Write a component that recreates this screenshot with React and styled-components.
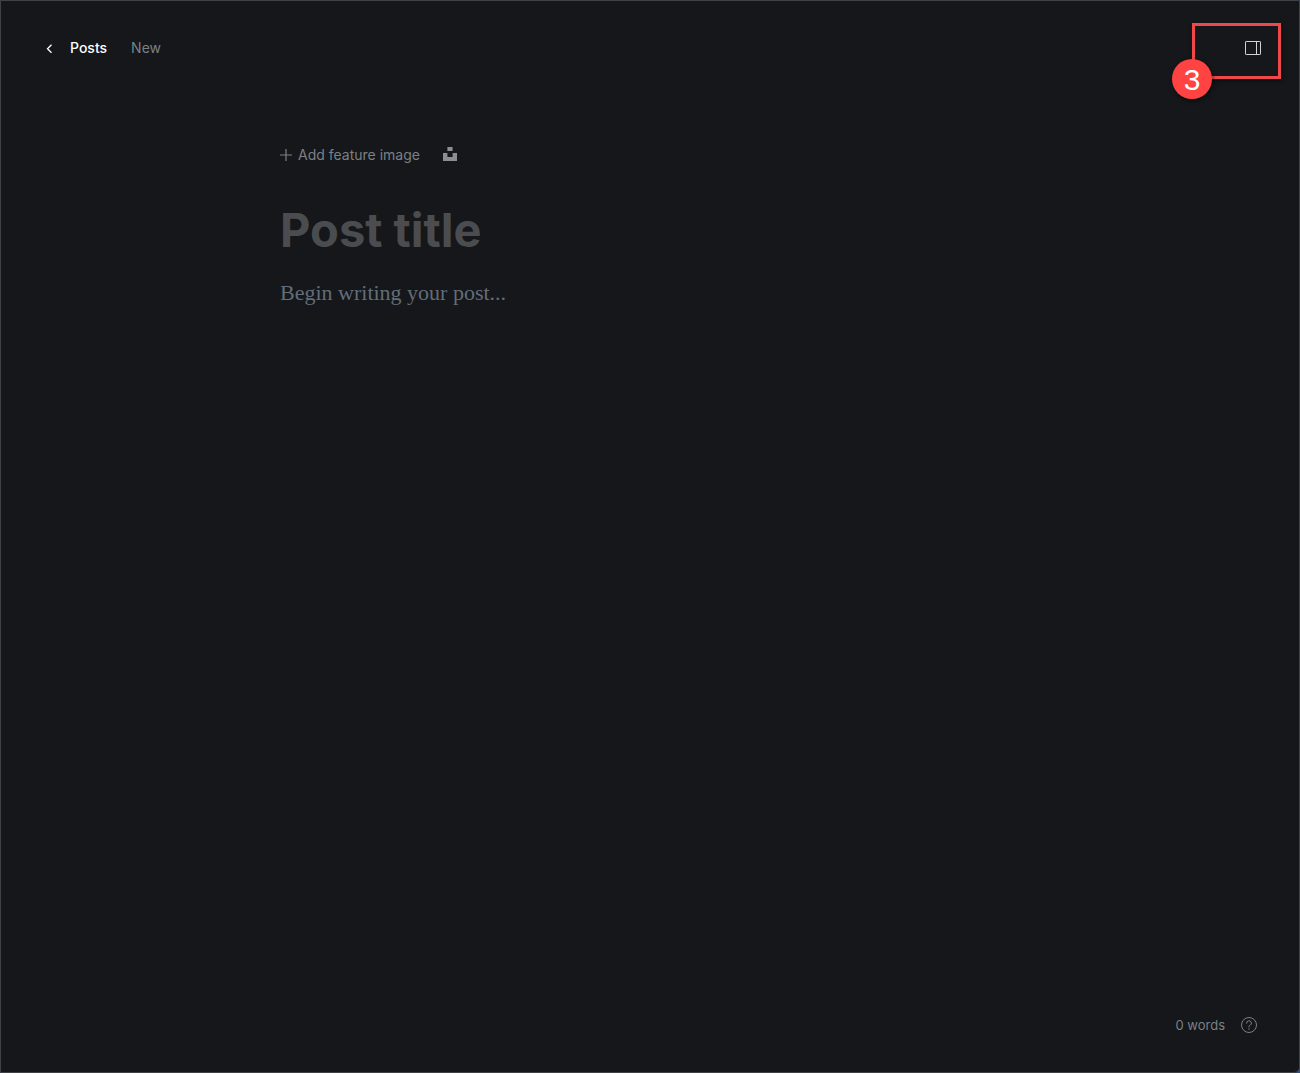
import React from 'react';
import styled, { createGlobalStyle } from 'styled-components';

const App = () => (
  <>
    <GlobalStyle />
    <Editor>
      <Header>
        <Breadcrumb aria-label="Breadcrumb">
          <BackLink href="#posts">
            <ChevronIcon />
            Posts
          </BackLink>
          <Status>New</Status>
        </Breadcrumb>
        <SettingsToggle type="button" aria-label="Settings">
          <SidebarIcon />
        </SettingsToggle>
        <Highlight>
          <Step>3</Step>
        </Highlight>
      </Header>
      <Canvas>
        <FeatureImage>
          <AddButton type="button">
            <PlusIcon />
            Add feature image
          </AddButton>
          <IconButton type="button" aria-label="Unsplash">
            <UnsplashIcon />
          </IconButton>
        </FeatureImage>
        <TitleInput type="text" aria-label="Post title" placeholder="Post title" />
        <BodyInput
          rows={2}
          aria-label="Post content"
          placeholder="Begin writing your post..."
        />
      </Canvas>
      <Footer>
        <WordCount>0 words</WordCount>
        <HelpLink href="#help" aria-label="Help">
          <HelpIcon />
        </HelpLink>
      </Footer>
    </Editor>
  </>
);

const ChevronIcon = () => (
  <svg width="8" height="12" viewBox="0 0 8 12" fill="none" aria-hidden="true">
    <path d="M6.5 2.8l-4 4 4 4" stroke="currentColor" strokeWidth="1.3" />
  </svg>
);

const SidebarIcon = () => (
  <svg width="16" height="14" viewBox="0 0 16 14" fill="none" aria-hidden="true">
    <rect x=".5" y=".5" width="15" height="13" rx=".6" stroke="currentColor" />
    <path d="M11.5 1v12" stroke="currentColor" />
  </svg>
);

const PlusIcon = () => (
  <svg width="12" height="12" viewBox="0 0 12 12" aria-hidden="true">
    <path d="M6 0v12M0 6h12" stroke="currentColor" strokeWidth="1.2" />
  </svg>
);

const UnsplashIcon = () => (
  <svg width="14" height="16" viewBox="0 0 14 16" aria-hidden="true">
    <path d="M4.4 4V0h5.2v4H4.4zM9.6 6H14v8H0V6h4.4v4h5.2V6z" fill="currentColor" />
  </svg>
);

const HelpIcon = () => (
  <svg width="16" height="16" viewBox="0 0 16 16" fill="none" aria-hidden="true">
    <circle cx="8" cy="8" r="7.5" stroke="currentColor" />
    <path
      d="M5.6 6.2a2.4 2.4 0 1 1 3.5 2.1c-.7.4-1.1.7-1.1 1.4v.3"
      stroke="currentColor"
      strokeLinecap="round"
    />
    <circle cx="8" cy="12" r=".7" fill="currentColor" />
  </svg>
);

const GlobalStyle = createGlobalStyle`
  *, *::before, *::after {
    box-sizing: border-box;
  }

  body {
    margin: 0;
    background: #35507c;
    font-family: Inter, sans-serif;
    font-size: 14px;
  }

  button, input, textarea {
    margin: 0;
    padding: 0;
    border: 0;
    background: none;
    color: inherit;
    font: inherit;
  }

  svg {
    display: block;
  }
`;

const Editor = styled.div`
  display: flex;
  flex-direction: column;
  min-height: 100vh;
  border: 1px solid #3f4144;
  border-radius: 0 0 6px 0;
  background: #15171a;
  color: #7c8086;
`;

const Header = styled.header`
  position: relative;
  display: flex;
  align-items: center;
  justify-content: space-between;
  height: 94px;
  padding: 0 38px 0 44px;
`;

const Breadcrumb = styled.nav`
  display: flex;
  align-items: center;
  gap: 24px;
  line-height: 20px;
`;

const BackLink = styled.a`
  display: flex;
  align-items: center;
  gap: 17px;
  color: #fff;
  font-weight: 500;
  text-decoration: none;
`;

const Status = styled.span`
  color: #7c8086;
`;

const SettingsToggle = styled.button`
  color: #ced4d9;
`;

/* Callout over the settings toggle */
const Highlight = styled.div`
  position: absolute;
  top: 22px;
  right: 18px;
  width: 89px;
  height: 56px;
  border: 3px solid #f04848;
  box-shadow: 1px 2px 4px rgba(0, 0, 0, 0.5);
  pointer-events: none;
`;

const Step = styled.span`
  position: absolute;
  bottom: -23px;
  left: -23px;
  width: 40px;
  height: 40px;
  border-radius: 50%;
  background: #ff4242;
  box-shadow: 1px 2px 4px rgba(0, 0, 0, 0.5);
  color: #fff;
  font-family: 'Liberation Sans', Arial, sans-serif;
  font-size: 30px;
  line-height: 42px;
  text-align: center;
`;

const Canvas = styled.main`
  display: flex;
  flex: 1;
  flex-direction: column;
  width: 100%;
  max-width: 740px;
  margin: 0 auto;
  padding-top: 48px;
`;

const FeatureImage = styled.div`
  display: flex;
  align-items: center;
  gap: 23px;
  height: 24px;
`;

const AddButton = styled.button`
  display: flex;
  align-items: center;
  gap: 6px;
  line-height: 20px;
`;

const IconButton = styled.button`
  color: #8b8e92;
`;

const TitleInput = styled.input`
  width: 100%;
  height: 60px;
  margin-top: 32px;
  color: #fff;
  font-size: 47px;
  font-weight: 700;
  outline: none;

  &::placeholder {
    color: #4a4c4f;
    opacity: 1;
  }
`;

const BodyInput = styled.textarea`
  width: 100%;
  margin-top: 16px;
  color: #fff;
  font-family: Georgia, 'Liberation Serif', serif;
  font-size: 22px;
  line-height: 36px;
  outline: none;
  resize: none;

  &::placeholder {
    color: #626d79;
    opacity: 1;
  }
`;

const Footer = styled.footer`
  display: flex;
  align-items: center;
  justify-content: flex-end;
  gap: 16px;
  height: 95px;
  padding-right: 42px;
`;

const WordCount = styled.span`
  font-size: 13px;
`;

const HelpLink = styled.a`
  color: #7c8086;
`;

export default App;
